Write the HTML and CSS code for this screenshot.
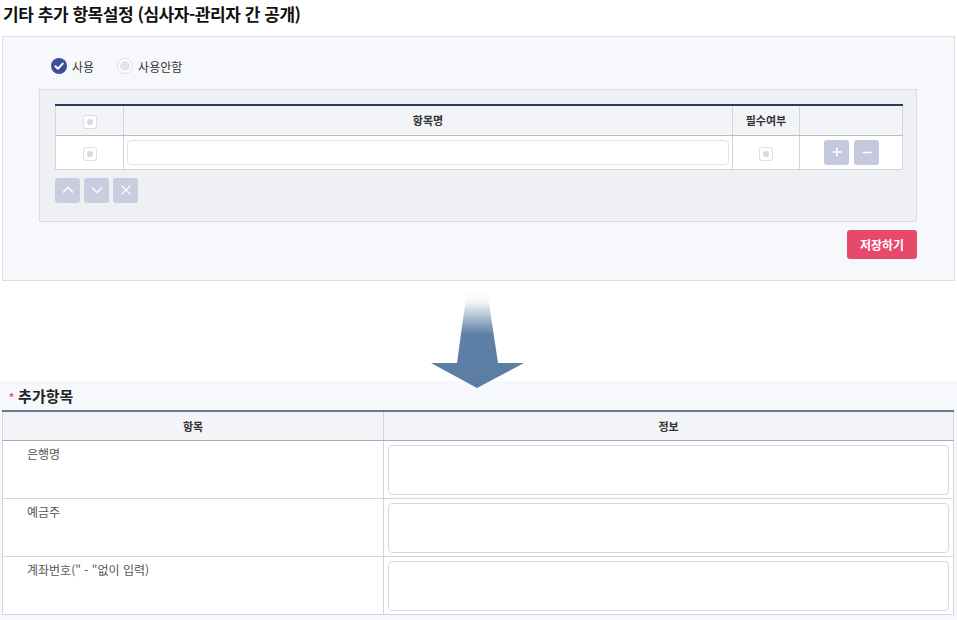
FILE: index.html
```html
<!DOCTYPE html>
<html lang="ko">
<head>
<meta charset="utf-8">
<link rel="stylesheet" href="styles.css">
</head>
<body>
<h1 class="title">기타 추가 항목설정 (심사자-관리자 간 공개)</h1>

<section class="panel">
  <div class="radios">
    <label class="radio">
      <span class="radio-on"><svg width="16" height="16" viewBox="0 0 16 16"><circle cx="8" cy="8" r="8" fill="#3b4d9b"/><path d="M4.4 8.2 L7 10.7 L11.7 5.6" fill="none" stroke="#fff" stroke-width="2" stroke-linecap="round" stroke-linejoin="round"/></svg></span>
      <span>사용</span>
    </label>
    <label class="radio">
      <span class="radio-off"></span>
      <span>사용안함</span>
    </label>
  </div>

  <div class="inner">
    <table class="grid">
      <colgroup><col class="c1"><col class="c2"><col class="c3"><col class="c4"></colgroup>
      <thead>
        <tr><th><span class="chk"></span></th><th>항목명</th><th>필수여부</th><th></th></tr>
      </thead>
      <tbody>
        <tr>
          <td><span class="chk"></span></td>
          <td class="inp-cell"><div class="inp"></div></td>
          <td><span class="chk"></span></td>
          <td><div class="pm"><span class="sbtn"><svg width="12" height="12" viewBox="0 0 12 12"><path d="M6 1.5V10.5M1.5 6H10.5" stroke="#fff" stroke-width="1.6"/></svg></span><span class="sbtn"><svg width="12" height="12" viewBox="0 0 12 12"><path d="M1.5 6.5H10.5" stroke="#fff" stroke-width="1.6"/></svg></span></div></td>
        </tr>
      </tbody>
    </table>
    <div class="moves">
      <span class="sbtn light"><svg width="14" height="14" viewBox="0 0 14 14"><path d="M2 9.5L7 4.5L12 9.5" fill="none" stroke="#fff" stroke-width="1.3"/></svg></span>
      <span class="sbtn light"><svg width="14" height="14" viewBox="0 0 14 14"><path d="M2 4.5L7 9.5L12 4.5" fill="none" stroke="#fff" stroke-width="1.3"/></svg></span>
      <span class="sbtn light"><svg width="14" height="14" viewBox="0 0 14 14"><path d="M2.5 2.5L11.5 11.5M11.5 2.5L2.5 11.5" fill="none" stroke="#fff" stroke-width="1.1"/></svg></span>
    </div>
  </div>

  <div class="actions"><button class="save">저장하기</button></div>
</section>

<div class="arrow-wrap">
  <svg class="arrow" width="100" height="108" viewBox="0 0 100 108">
    <defs>
      <linearGradient id="g" x1="0" y1="0" x2="0" y2="1">
        <stop offset="0" stop-color="#ffffff"/>
        <stop offset="0.12" stop-color="#f4f7fa"/>
        <stop offset="0.45" stop-color="#5e80a6"/>
        <stop offset="1" stop-color="#5b7da4"/>
      </linearGradient>
    </defs>
    <polygon points="36,9 56,9 67,82 93,82 46,107 0,82 26,82" fill="url(#g)"/>
  </svg>
</div>

<section class="extra">
  <h2 class="extra-title"><span class="star">*</span>추가항목</h2>
  <table class="info">
    <colgroup><col class="k"><col class="v"></colgroup>
    <thead><tr><th>항목</th><th>정보</th></tr></thead>
    <tbody>
      <tr><td class="lbl">은행명</td><td class="val"><div class="box"></div></td></tr>
      <tr><td class="lbl">예금주</td><td class="val"><div class="box"></div></td></tr>
      <tr><td class="lbl">계좌번호(" - "없이 입력)</td><td class="val"><div class="box"></div></td></tr>
    </tbody>
  </table>
</section>
</body>
</html>
```

FILE: styles.css
```css
* { box-sizing: border-box; }
html, body { margin: 0; padding: 0; background: #fff; }
body {
  font-family: "Noto Sans CJK KR", "Noto Sans", sans-serif;
  color: #222;
  width: 957px;
}
.title {
  margin: 0;
  padding: 0 0 0 3px;
  height: 36px;
  font-size: 17px;
  line-height: 27px;
  font-weight: 700;
  color: #111;
  letter-spacing: -0.45px;
}
.panel {
  margin-left: 2px;
  width: 953px;
  height: 245px;
  background: #f7f8fc;
  border: 1px solid #dcdde2;
  padding: 20px 37px 0 36px;
}
.radios {
  display: flex;
  align-items: center;
  gap: 23px;
  height: 18px;
  padding-left: 12px;
  font-size: 12px;
  color: #333;
}
.radio { display: flex; align-items: center; gap: 5px; }
.radio-on { display: block; width: 16px; height: 16px; }
.radio-on svg { display: block; }
.radio-off {
  display: block;
  width: 16px; height: 16px;
  border-radius: 50%;
  border: 1px solid #dcdde3;
  background: #fff;
  position: relative;
}
.radio-off::after {
  content: "";
  position: absolute;
  left: 2px; top: 2px;
  width: 10px; height: 10px;
  border-radius: 50%;
  background: #e2e4ec;
}
.inner {
  margin-top: 14px;
  height: 133px;
  background: #eff0f4;
  border: 1px solid #dcdde2;
  padding: 14px 14px 0 15px;
}
.grid {
  width: 847px;
  border-collapse: collapse;
  table-layout: fixed;
  border-top: 2px solid #2b3566;
  font-size: 11px;
}
.grid .c1 { width: 68px; }
.grid .c2 { width: 609px; }
.grid .c3 { width: 67px; }
.grid .c4 { width: 103px; }
.grid th {
  height: 30px;
  background: #f3f4f7;
  border: 1px solid #d4d5da;
  border-top: 0;
  border-bottom: 1px solid #b9bbc2;
  font-weight: 700;
  color: #333;
  text-align: center;
  padding: 0;
}
.grid td {
  height: 34px;
  background: #fff;
  border: 1px solid #d4d5da;
  text-align: center;
  padding: 0;
}
.grid td.inp-cell { padding: 0 3px; }
.inp {
  height: 25px;
  border: 1px solid #e1e2e6;
  border-radius: 4px;
  background: #fff;
}
.chk {
  display: inline-block;
  vertical-align: middle;
  width: 14px; height: 14px;
  border: 1px solid #dcdde2;
  border-radius: 3px;
  background: #fff;
  position: relative;
}
.chk::after {
  content: "";
  position: absolute;
  left: 3px; top: 3px;
  width: 6px; height: 6px;
  border-radius: 50%;
  background: #d3d8e6;
}
.pm { display: flex; justify-content: center; gap: 5px; padding-left: 1px; }
.sbtn {
  display: flex;
  align-items: center;
  justify-content: center;
  width: 25px; height: 25px;
  border-radius: 3px;
  background: #c4c9dd;
}
.sbtn.light { background: #c8cde0; }
.moves { display: flex; gap: 4px; margin-top: 8px; }
.actions { display: flex; justify-content: flex-end; margin-top: 8px; }
.save {
  width: 70px; height: 29px;
  border: 0;
  border-radius: 3px;
  background: #e8486a;
  color: #fff;
  font-family: inherit;
  font-size: 12px;
  font-weight: 700;
  padding: 0;
}
.arrow-wrap {
  height: 100px;
  display: flex;
  justify-content: center;
  padding-left: 4px;
  position: relative;
  z-index: 1;
}
.arrow { display: block; margin-bottom: -8px; }
.extra {
  background: #f7f8fc;
  padding: 0 4px 4px 2px;
  height: 239px;
}
.extra-title {
  margin: 0;
  height: 29px;
  display: flex;
  align-items: center;
  font-size: 15px;
  font-weight: 700;
  color: #222;
  padding-left: 7px;
  padding-bottom: 1px;
}
.star { color: #e8486a; font-size: 10px; margin-right: 4px; line-height: 1; padding-top: 4px; }
.info {
  width: 951px;
  border-collapse: collapse;
  table-layout: fixed;
  border-top: 2px solid #6d7493;
  font-size: 12px;
}
.info .k { width: 381px; }
.info .v { width: 570px; }
.info th {
  height: 29px;
  background: #f3f4f7;
  border: 1px solid #d4d5da;
  border-top: 0;
  border-bottom: 1px solid #a9abb2;
  font-size: 11px;
  font-weight: 700;
  color: #333;
  padding: 0;
}
.info td {
  background: #fff;
  border: 1px solid #d4d5da;
  vertical-align: top;
  padding: 0;
}
.info td.lbl {
  padding: 4px 0 0 24px;
  color: #555;
  font-size: 12px;
}
.info td.val { padding: 4px 4px 3px 4px; }
.box {
  height: 50px;
  border: 1px solid #d9dadf;
  border-radius: 4px;
  background: #fff;
}
```
